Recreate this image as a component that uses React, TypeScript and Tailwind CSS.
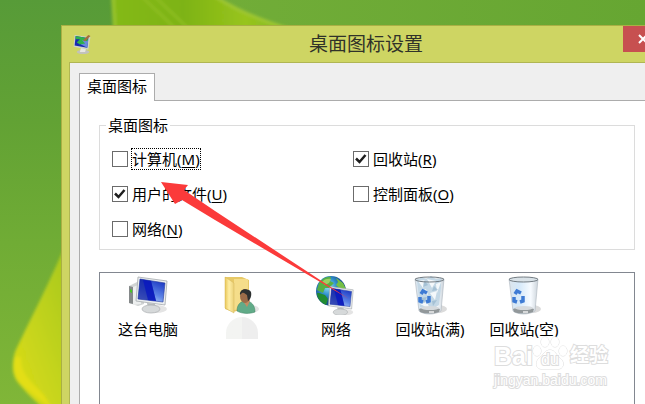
import { useState } from "react";
import type { ReactNode } from "react";

type Option = { id: string; text: string; hotkey: string; checked: boolean };

const options: Option[] = [
  { id: "computer", text: "计算机", hotkey: "M", checked: false },
  { id: "recycle", text: "回收站", hotkey: "R", checked: true },
  { id: "files", text: "用户的文件", hotkey: "U", checked: true },
  { id: "control", text: "控制面板", hotkey: "O", checked: false },
  { id: "network", text: "网络", hotkey: "N", checked: false },
];

function Wallpaper() {
  return (
    <svg className="absolute inset-0 h-full w-full" viewBox="0 0 645 404" preserveAspectRatio="xMinYMin slice" aria-hidden="true">
      <defs>
        <linearGradient id="grass" x1="0" y1="0" x2="0" y2="1">
          <stop offset="0" stopColor="#579b38" />
          <stop offset="0.3" stopColor="#62a234" />
          <stop offset="0.6" stopColor="#70ac35" />
          <stop offset="1" stopColor="#80b638" />
        </linearGradient>
        <linearGradient id="sky" x1="0" y1="0" x2="1" y2="0">
          <stop offset="0" stopColor="#72ad38" />
          <stop offset="1" stopColor="#66a632" />
        </linearGradient>
        <linearGradient id="topLeaf" x1="0" y1="0" x2="1" y2="0">
          <stop offset="0" stopColor="#84b916" />
          <stop offset="0.4" stopColor="#7db313" />
          <stop offset="0.75" stopColor="#98c41d" />
          <stop offset="1" stopColor="#80b927" />
        </linearGradient>
        <linearGradient id="sideLeaf" x1="0" y1="1" x2="1" y2="0">
          <stop offset="0" stopColor="#dfdd16" />
          <stop offset="0.5" stopColor="#c1d31c" />
          <stop offset="1" stopColor="#a3c61f" />
        </linearGradient>
        <filter id="soft">
          <feGaussianBlur stdDeviation="1.5" />
        </filter>
      </defs>
      <rect width="645" height="404" fill="url(#grass)" />
      <rect x="200" width="445" height="30" fill="url(#sky)" />
      <g filter="url(#soft)">
        <path d="M112-5H212C234 8 258 20 290 30H114Z" fill="url(#topLeaf)" />
        <path d="M113-5L115 30" stroke="#96c229" strokeWidth="4" />
        <path d="M140-5L177 30M153-5L190 30" stroke="#8dbd21" strokeWidth="3" />
        <path d="M213-5C232 8 259 20 292 30" stroke="#a0c832" strokeWidth="3" fill="none" />
        <path d="M64 248C48 286 27 326 15 352C10 370 14 379 21 386C29 396 38 403 47 412H75V248Z" fill="url(#sideLeaf)" />
        <path d="M15 357C12 374 18 382 27 389C36 397 44 403 52 408L44 395C31 381 20 374 21 357Z" fill="#e3de15" />
      </g>
    </svg>
  );
}

function MonitorArt() {
  return (
    <>
      <ellipse cx="28" cy="34" rx="11" ry="4" fill="#777" opacity=".2" />
      <path d="M19 28L27 29L28 33H20Z" fill="#b9bdbe" />
      <ellipse cx="23" cy="34" rx="9" ry="4" fill="#d6d9da" stroke="#aaaeb0" strokeWidth=".7" />
      <path d="M10 2L39 6L37 30L8 26Z" fill="#eceff0" stroke="#a5aaad" strokeWidth=".8" />
      <path d="M12 4L37 8L35 27L10 24Z" fill="url(#screen)" stroke="#263b9a" strokeWidth=".6" />
      <path d="M12 4L23 6L28 26L10 24Z" fill="#1020a0" opacity=".75" />
      <path d="M15 5L23 6L28 26L20 25Z" fill="#0716c2" opacity=".75" />
    </>
  );
}

function Drawing({ children }: { children: ReactNode }) {
  return <svg className="h-10 w-10" viewBox="0 0 40 40" aria-hidden="true">{children}</svg>;
}

function SharedPaints() {
  return (
    <svg className="absolute h-0 w-0" aria-hidden="true">
      <defs>
        <linearGradient id="screen" x1=".3" y1="1" x2=".8" y2="0">
          <stop stopColor="#b6d4fa" />
          <stop offset=".4" stopColor="#5c83e6" />
          <stop offset="1" stopColor="#1531c0" />
        </linearGradient>
        <linearGradient id="folder">
          <stop stopColor="#e8c758" />
          <stop offset=".45" stopColor="#ffeea5" />
          <stop offset="1" stopColor="#ead078" />
        </linearGradient>
        <radialGradient id="globe" cx=".4" cy=".35">
          <stop stopColor="#9ae3f5" />
          <stop offset=".55" stopColor="#3292ce" />
          <stop offset="1" stopColor="#184f8d" />
        </radialGradient>
        <linearGradient id="glass">
          <stop stopColor="#dce5ec" />
          <stop offset=".35" stopColor="#d5e9fa" />
          <stop offset=".75" stopColor="#f7fbff" />
          <stop offset="1" stopColor="#cbd3da" />
        </linearGradient>
      </defs>
    </svg>
  );
}

function ComputerIcon() {
  return (
    <Drawing>
      <path d="M1 11L9 7L16 10V29L10 31L1 28Z" fill="#d1d4d4" />
      <path d="M1 11L5 12V29L1 28Z" fill="#85898a" />
      <path d="M5 12L13 9V29L5 30Z" fill="#eceeee" />
      <path d="M2 14L4 15V18L2 17Z" fill="#46c624" />
      <MonitorArt />
    </Drawing>
  );
}

function FolderIcon() {
  return (
    <Drawing>
      <ellipse cx="28" cy="34" rx="9" ry="4" fill="#777" opacity=".2" />
      <path d="M3 2H20L27 5V33L11 37L3 34Z" fill="#e7c967" />
      <path d="M12 4H26V33L12 35Z" fill="#f5dd8a" />
      <path d="M3 2L12 8V38L3 33Z" fill="url(#folder)" stroke="#d4b65b" strokeWidth=".5" />
      <path d="M15 36C15 29 19 26 24 26C29 26 33 30 33 37C28 39 20 39 15 36Z" fill="#61ab88" stroke="#39805f" strokeWidth=".5" />
      <path d="M21 26L25 32L28 26L26 22H21Z" fill="#c48b61" />
      <ellipse cx="23" cy="21" rx="5" ry="7" fill="#9c6c49" />
      <path d="M18 20C17 13 27 13 29 17C30 21 28 25 26 26L25 20C23 19 22 17 20 18Z" fill="#2d3030" />
    </Drawing>
  );
}

function NetworkIcon() {
  return (
    <Drawing>
      <circle cx="15" cy="16" r="15" fill="url(#globe)" />
      <path d="M3 8C7 3 11 1 15 2L14 6L18 8L13 13L9 13L7 18L1 15Z" fill="#57b044" />
      <path d="M20 3L27 8L30 14L24 14L20 10L22 7Z" fill="#75bf45" />
      <path d="M3 18L9 20L12 24L10 30C5 28 1 23 1 18Z" fill="#218c32" />
      <path d="M6 7C8 4 12 3 15 4L13 8L9 10Z" fill="#adda6a" opacity=".8" />
      <g transform="translate(6 10) scale(.8)"><MonitorArt /></g>
    </Drawing>
  );
}

function BinIcon({ full = false }: { full?: boolean }) {
  return (
    <Drawing>
      <ellipse cx="28" cy="34" rx="9" ry="4" fill="#888" opacity=".3" />
      <path d="M5 4H34L31 36C25 40 14 40 9 36Z" fill="url(#glass)" stroke="#acb5bd" strokeWidth=".6" />
      {full && (
        <g>
          <path d="M7 5L12 2L16 4L21 1L26 4L31 3L31 13L29 30L21 35L10 32Z" fill="#c4d8e6" />
          <path d="M8 6L15 5L13 13ZM17 4L26 6L22 13ZM26 9L31 7L27 18ZM10 17L16 14L18 20ZM20 18L27 16L25 25ZM10 29L17 27L20 34Z" fill="#f4f8fb" />
          <path d="M14 5L18 10L13 12ZM24 11L28 15L22 16ZM11 23L17 22L14 28ZM22 26L27 25L23 31Z" fill="#91b2ca" opacity=".6" />
        </g>
      )}
      <path d="M9 34C14 32 25 32 30 34L29 37C24 39 15 39 10 37Z" fill="#92989a" />
      <ellipse cx="20" cy="33" rx="9" ry="2" fill="#d6dadd" />
      <path d="M19 36H24V38H19Z" fill="#f5f5f5" opacity=".7" />
      <ellipse cx="19.5" cy="4.5" rx="14.5" ry="2.5" fill={full ? "none" : "#d9e2e8"} stroke="#727b82" strokeWidth="1" />
      <g fill="none" stroke="#3e7bd4" strokeWidth="3.500">
        <path d="M11 19L13 16L17 18" />
        <path d="M19 21L19 26L16 27" />
        <path d="M13 27L10 26L10 22" />
      </g>
    </Drawing>
  );
}

function TitleIcon() {
  return (
    <svg className="h-5 w-5" viewBox="1 0 18 19" aria-hidden="true">
      <ellipse cx="11" cy="17" rx="6" ry="2" fill="#c2c2bb" />
      <path d="M9 13H14L13 17H8Z" fill="#e7e7e1" />
      <path d="M3 1L18 3L16 15L2 12Z" fill="#ced4c5" />
      <path d="M4 2L16 4L15 13L3 11Z" fill="#1729b2" />
      <path d="M10 5L16 6L15 13L9 10Z" fill="#6a8bdc" />
      <path d="M4 2L16 4L15 7L10 6L13 9L8 10L5 8L8 5L4 5Z" fill="#2eb24a" />
      <path d="M11 6L16 1L18 2L13 7Z" fill="#a66c3c" />
    </svg>
  );
}

function OptionBox({ option }: { option: Option }) {
  const [checked, setChecked] = useState(option.checked);
  const focused = option.id === "computer";
  return (
    <div className="flex h-[22px] items-center gap-[3px]">
      <span className="grid h-4 w-4 shrink-0">
        <input
          id={option.id}
          type="checkbox"
          checked={checked}
          onChange={(event) => setChecked(event.target.checked)}
          className="col-start-1 row-start-1 h-4 w-4 appearance-none border border-[#6b6b6b] bg-white"
        />
        {checked && (
          <svg className="pointer-events-none col-start-1 row-start-1 h-4 w-4" viewBox="0 0 16 16" aria-hidden="true">
            <path d="M3 7.500L6.500 11L12.500 4" fill="none" stroke="#1e1e1e" strokeWidth="2.500" />
          </svg>
        )}
      </span>
      <label
        htmlFor={option.id}
        className={focused ? "border border-dotted border-black leading-5" : "border border-transparent leading-5"}
      >
        {option.text}(<span className="underline underline-offset-2">{option.hotkey}</span>)
      </label>
    </div>
  );
}

function IconItem({ icon, label }: { icon: ReactNode; label?: string }) {
  return (
    <li className="flex w-[94px] shrink-0 flex-col items-center gap-[2px]">
      {icon}
      {label ? (
        <span className="whitespace-nowrap leading-6">{label}</span>
      ) : (
        <span className="h-[22px] w-8 rounded-t-full bg-linear-to-r from-[#f3f4f2] from-50% to-[#eeeeee] to-50%" />
      )}
    </li>
  );
}

function Watermark() {
  return (
    <div className="absolute top-[338px] left-[494px] font-['Liberation_Sans','Noto_Sans_CJK_SC',sans-serif] text-white [-webkit-text-stroke:2px_#dddddd] [paint-order:stroke]" aria-hidden="true">
      <div className="flex h-8 items-end gap-px">
        <span className="text-[25px] leading-7 font-bold">Bai</span>
        <span className="grid h-8 w-8">
          <svg className="col-start-1 row-start-1 h-8 w-8 overflow-visible" viewBox="0 0 32 32">
            <g fill="#fff" stroke="#dedede">
              <ellipse cx="3" cy="13" rx="4" ry="5" />
              <ellipse cx="11" cy="4" rx="4" ry="5" />
              <ellipse cx="21" cy="4" rx="4" ry="5" />
              <ellipse cx="29" cy="13" rx="4" ry="5" />
              <path d="M16 12C21 12 22 17 26 20C32 25 29 32 23 31H9C3 32 0 26 5 20C9 17 11 12 16 12Z" />
            </g>
          </svg>
          <span className="col-start-1 row-start-1 self-end text-center text-[16px] leading-5">du</span>
        </span>
        <span className="ml-[3px] text-[19px] leading-7 font-bold">经验</span>
      </div>
      <div className="text-[14px] leading-5">jingyan.baidu.com</div>
    </div>
  );
}

export default function App() {
  return (
    <main className="relative flex h-screen overflow-hidden font-['Noto_Sans','Noto_Sans_CJK_SC',sans-serif] text-[15px] text-black">
      <Wallpaper />
      <SharedPaints />
      <section className="relative mt-[25px] -mr-[26px] ml-[61px] flex min-w-0 flex-1 flex-col border border-b-0 border-[#a9b044] bg-[#ced563] px-[7px]">
        <header className="grid h-9 shrink-0 grid-cols-[40px_1fr_40px] items-center">
          <span className="pl-[3px]"><TitleIcon /></span>
          <h1 className="text-center text-[19px] leading-7 text-[#303229]">桌面图标设置</h1>
          <button type="button" aria-label="关闭" className="flex h-[26px] items-center justify-center self-start bg-[#c75050]">
            <svg className="h-[10px] w-[10px]" viewBox="0 0 10 10" aria-hidden="true">
              <path d="M1 1L9 9M9 1L1 9" stroke="#fff" strokeWidth="2" />
            </svg>
          </button>
        </header>
        <div className="flex flex-1 flex-col border border-b-0 border-[#b0b653] bg-[#efefef] px-[9px] pt-[10px]">
          <div role="tablist" className="flex">
            <button type="button" role="tab" aria-selected="true" className="z-10 -mb-px h-7 border border-b-0 border-[#acacac] bg-white px-[7px] pb-1 leading-5">
              桌面图标
            </button>
          </div>
          <div role="tabpanel" className="flex flex-1 flex-col border border-b-0 border-[#acacac] bg-white pt-[13px] pr-[17px] pl-[19px]">
            <fieldset className="border border-[#dcdcdc] pr-10 pl-3">
              <legend className="-ml-[6px] px-[2px] leading-[22px]">桌面图标</legend>
              <div className="grid grid-cols-2 gap-y-[13px] pt-3 pb-[9px]">
                {options.map((option) => <OptionBox key={option.id} option={option} />)}
              </div>
            </fieldset>
            <ul className="mt-[22px] flex flex-1 border border-b-0 border-[#828790] pt-[2px] pl-[1px]">
              <IconItem icon={<ComputerIcon />} label="这台电脑" />
              <IconItem icon={<FolderIcon />} />
              <IconItem icon={<NetworkIcon />} label="网络" />
              <IconItem icon={<BinIcon full />} label="回收站(满)" />
              <IconItem icon={<BinIcon />} label="回收站(空)" />
            </ul>
          </div>
        </div>
      </section>
      <svg className="pointer-events-none absolute top-[180px] left-[160px] h-[120px] w-[190px]" viewBox="0 0 190 120" aria-hidden="true">
        <path d="M1 2L28 5L24 10L55 31L189 119L55 40L22 20L15 24Z" fill="#fb3a3a" />
      </svg>
      <Watermark />
    </main>
  );
}
